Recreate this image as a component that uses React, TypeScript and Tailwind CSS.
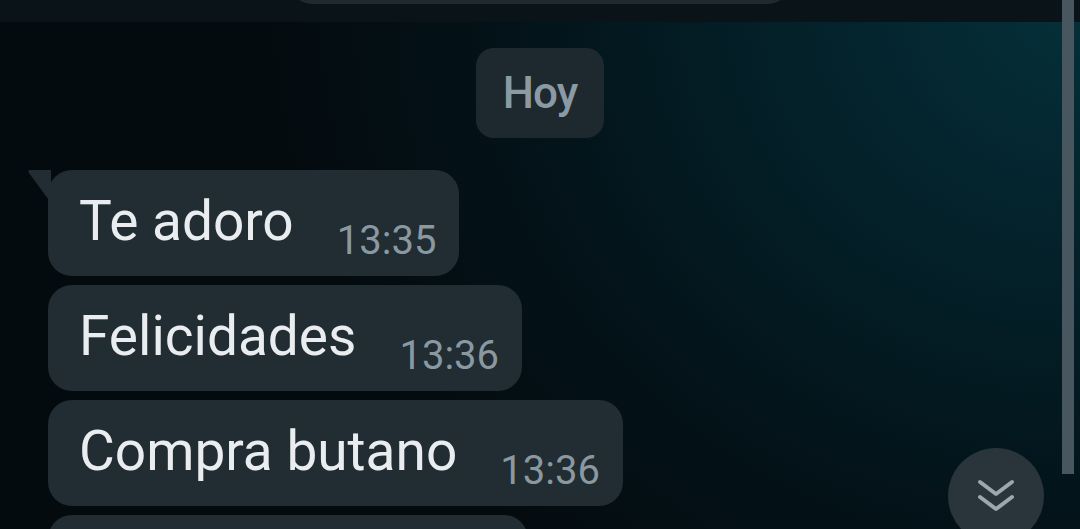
const messages = [
  { text: 'Te adoro', time: '13:35', tail: true },
  { text: 'Felicidades', time: '13:36' },
  { text: 'Compra butano', time: '13:36' },
  { text: '', time: '' },
]

function Bubble({ text, time, tail }: { text: string; time: string; tail?: boolean }) {
  return (
    <div className="relative flex h-[106px] shrink-0 items-start rounded-[24px] bg-[#212c33] pl-[31px] pr-[23px]">
      {tail && (
        <svg className="absolute -left-[21px] top-0" width="24" height="33" viewBox="0 0 24 33">
          <path d="M24 0 L3.5 0 Q0 0 2 3 L24 33 Z" fill="#212c33" />
        </svg>
      )}
      {text && (
        <>
          <span className="mt-[19px] text-[55px] leading-[64px] text-[#e9edef]">{text}</span>
          <span className="ml-[43px] mt-[47px] text-[40px] leading-[48px] text-[#8b989f]">{time}</span>
        </>
      )}
      {!text && <span className="w-[426px]" />}
    </div>
  )
}

export default function App() {
  return (
    <div className="relative h-[529px] w-[1080px] overflow-hidden bg-[#040b0f] font-['Roboto',sans-serif]">
      <div className="pointer-events-none absolute inset-0 bg-[radial-gradient(ellipse_75%_140%_at_100%_0%,#05303a_0%,#04212a_35%,#031319_70%,transparent_100%)]" />

      <div className="relative flex flex-col">
        <div className="flex h-[22px] justify-center overflow-hidden bg-[#0a1318]">
          <div className="-mt-[36px] h-[40px] w-[500px] rounded-b-[22px] bg-[#1f2a30]" />
        </div>

        <div className="mt-[26px] flex justify-center">
          <div className="flex h-[90px] w-[128px] items-center justify-center rounded-[18px] bg-[#1e292f] text-[44px] font-medium tracking-[-1px] text-[#8b9aa3]">
            Hoy
          </div>
        </div>

        <div className="mt-[32px] flex flex-col items-start gap-[9px] pl-[48px]">
          {messages.map((m, i) => (
            <Bubble key={i} {...m} />
          ))}
        </div>
      </div>

      <div className="absolute right-[6px] top-0 h-[474px] w-[12px] bg-[#47565f]" />

      <div className="absolute left-[948px] top-[448px] flex h-[96px] w-[96px] items-center justify-center rounded-full bg-[#2a353b]">
        <svg width="40" height="40" viewBox="0 0 40 40" fill="none" stroke="#9ba8af" strokeWidth="4" strokeLinecap="round" strokeLinejoin="round">
          <path d="M4 6 L20 18 L36 6" />
          <path d="M4 21 L20 33 L36 21" />
        </svg>
      </div>
    </div>
  )
}
